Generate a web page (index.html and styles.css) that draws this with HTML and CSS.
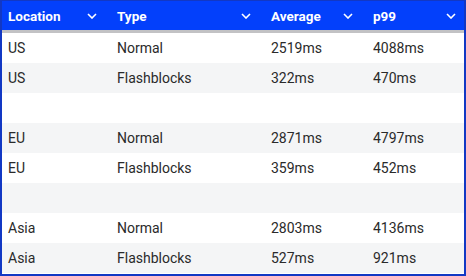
FILE: index.html
```html
<!DOCTYPE html>
<html>
<head>
<meta charset="utf-8">
<link rel="stylesheet" href="styles.css">
</head>
<body>
<div class="frame">
<table class="grid">
<colgroup><col class="c1"><col class="c2"><col class="c3"><col class="c4"></colgroup>
<thead>
<tr>
<th><div class="hc"><span>Location</span><svg class="chev" viewBox="0 0 10 6"><path d="M1 1 L5 5 L9 1" /></svg></div></th>
<th><div class="hc"><span>Type</span><svg class="chev" viewBox="0 0 10 6"><path d="M1 1 L5 5 L9 1" /></svg></div></th>
<th><div class="hc"><span>Average</span><svg class="chev" viewBox="0 0 10 6"><path d="M1 1 L5 5 L9 1" /></svg></div></th>
<th><div class="hc last"><span>p99</span><svg class="chev" viewBox="0 0 10 6"><path d="M1 1 L5 5 L9 1" /></svg></div></th>
</tr>
</thead>
<tbody>
<tr><td>US</td><td>Normal</td><td>2519ms</td><td>4088ms</td></tr>
<tr><td>US</td><td>Flashblocks</td><td>322ms</td><td>470ms</td></tr>
<tr><td></td><td></td><td></td><td></td></tr>
<tr><td>EU</td><td>Normal</td><td>2871ms</td><td>4797ms</td></tr>
<tr><td>EU</td><td>Flashblocks</td><td>359ms</td><td>452ms</td></tr>
<tr><td></td><td></td><td></td><td></td></tr>
<tr><td>Asia</td><td>Normal</td><td>2803ms</td><td>4136ms</td></tr>
<tr><td>Asia</td><td>Flashblocks</td><td>527ms</td><td>921ms</td></tr>
</tbody>
</table>
</div>
</body>
</html>
```
FILE: styles.css
```css
html, body { margin: 0; padding: 0; background: #fff; }
body { font-family: Roboto, "Liberation Sans", sans-serif; }
.frame {
  width: 466px;
  height: 276px;
  box-sizing: border-box;
  border: 2px solid #1238c4;
  border-top-width: 1px;
  overflow: hidden;
}
.grid { border-collapse: collapse; width: 100%; table-layout: fixed; }
.c1 { width: 109px; }
.c2 { width: 154px; }
.c3 { width: 102px; }
.c4 { width: auto; }
thead th {
  background: #0340fb;
  color: #fff;
  font-weight: bold;
  font-size: 13.5px;
  text-align: left;
  height: 29px;
  padding: 0 0 0 6px;
  border-bottom: 3px solid #c2c2c4;
}
.hc { display: flex; align-items: center; justify-content: space-between; padding-right: 14px; }
.hc.last { padding-right: 8px; }
.chev { width: 10px; height: 6px; fill: none; stroke: #fff; stroke-width: 1.6; }
tbody td {
  height: 30px;
  padding: 0 0 0 6px;
  font-size: 14px;
  color: #2a2a2a;
}
tbody tr:nth-child(even) td { background: #f4f5f6; }
```
